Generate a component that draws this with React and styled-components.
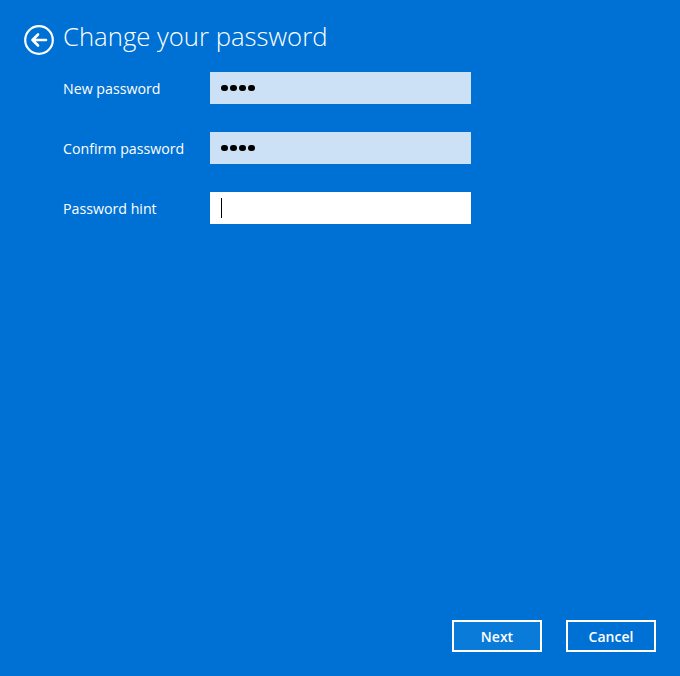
import { useState } from 'react';
import styled, { createGlobalStyle } from 'styled-components';

const GlobalStyle = createGlobalStyle`
	html, body {
		margin: 0;
		padding: 0;
		height: 100%;
		background: #0071d4;
	}
	#root {
		height: 100%;
	}
`;

const Page = styled.div`
	box-sizing: border-box;
	height: 100vh;
	display: flex;
	flex-direction: column;
	padding: 24px 24px 24px 24px;
	background: #0071d4;
	color: #fff;
	font-family: 'Open Sans', 'Noto Sans', sans-serif;
`;

const Header = styled.div`
	display: flex;
	align-items: center;
	gap: 9px;
	height: 31px;
`;

const BackButton = styled.button`
	width: 30px;
	height: 30px;
	padding: 0;
	border: none;
	background: none;
	cursor: pointer;
	display: flex;
`;

const Title = styled.h1`
	margin: -5px 0 0;
	font-size: 25.7px;
	font-weight: 300;
	line-height: 30px;
	color: #fff;
`;

const Form = styled.div`
	display: flex;
	flex-direction: column;
	gap: 28px;
	margin-top: 17px;
	padding-left: 39px;
`;

const Row = styled.div`
	display: flex;
	align-items: center;
	height: 32px;
`;

const Label = styled.label`
	width: 147px;
	font-size: 14.2px;
	color: #fff;
`;

const Field = styled.div`
	box-sizing: border-box;
	width: 261px;
	height: 32px;
	display: flex;
	align-items: center;
	padding-left: 11px;
	background: ${(p) => (p.$focused ? '#ffffff' : '#cce1f5')};
`;

const Dots = styled.span`
	display: flex;
	gap: 2.5px;
`;

const Dot = styled.span`
	width: 6.5px;
	height: 6.5px;
	border-radius: 50%;
	background: #000;
`;

const Caret = styled.span`
	width: 1px;
	height: 20px;
	background: #000;
`;

const Footer = styled.div`
	margin-top: auto;
	display: flex;
	justify-content: flex-end;
	gap: 24px;
`;

const ActionButton = styled.button`
	box-sizing: border-box;
	width: 90px;
	height: 32px;
	border: 2px solid #fff;
	background: ${(p) => (p.$primary ? '#0a7bd8' : 'transparent')};
	color: #fff;
	font-family: 'Open Sans', 'Noto Sans', sans-serif;
	font-size: 14px;
	font-weight: 600;
	cursor: pointer;
`;

const BackIcon = () => (
	<svg width="30" height="30" viewBox="0 0 30 30">
		<circle cx="15" cy="15" r="13.8" fill="none" stroke="#fff" strokeWidth="2.2" />
		<path
			d="M8.5 15H22M14 9.5L8.5 15L14 20.5"
			fill="none"
			stroke="#fff"
			strokeWidth="2.6"
			strokeLinecap="round"
			strokeLinejoin="round"
		/>
	</svg>
);

const PasswordDots = ({ count }) => (
	<Dots>
		{Array.from({ length: count }).map((_, i) => (
			<Dot key={i} />
		))}
	</Dots>
);

export default function App() {
	const [fields] = useState([
		{ label: 'New password', value: 4 },
		{ label: 'Confirm password', value: 4 },
	]);

	return (
		<>
			<GlobalStyle />
			<Page>
				<Header>
					<BackButton aria-label="Back">
						<BackIcon />
					</BackButton>
					<Title>Change your password</Title>
				</Header>
				<Form>
					{fields.map((f) => (
						<Row key={f.label}>
							<Label>{f.label}</Label>
							<Field>
								<PasswordDots count={f.value} />
							</Field>
						</Row>
					))}
					<Row>
						<Label>Password hint</Label>
						<Field $focused>
							<Caret />
						</Field>
					</Row>
				</Form>
				<Footer>
					<ActionButton $primary>Next</ActionButton>
					<ActionButton>Cancel</ActionButton>
				</Footer>
			</Page>
		</>
	);
}
